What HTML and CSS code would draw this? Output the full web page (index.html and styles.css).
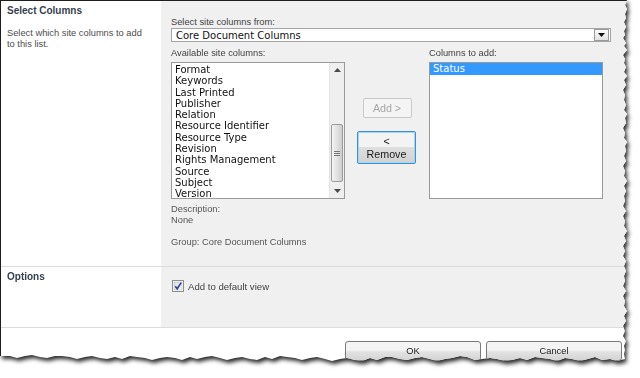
FILE: index.html
```html
<!DOCTYPE html>
<html lang="en">
<head>
    <meta charset="UTF-8">
    <meta name="viewport" content="width=device-width, initial-scale=1.0">
    <title>Add Columns from Site Columns</title>
    <link rel="stylesheet" href="styles.css">
</head>
<body>
    <div class="frame">
        <div class="sheet">
            <section class="section section-columns">
                <div class="section-info">
                    <h3>Select Columns</h3>
                    <p>Select which site columns to add to this list.</p>
                </div>
                <div class="section-body">
                    <div class="field-label">Select site columns from:</div>
                    <div class="dropdown">
                        <span>Core Document Columns</span>
                        <span class="dropdown-btn">
                            <svg width="7" height="4" viewBox="0 0 7 4"><path d="M0 0h7L3.5 4z" fill="#111"/></svg>
                        </span>
                    </div>

                    <div class="picker">
                        <div class="field-label">Available site columns:</div>
                        <div></div>
                        <div class="field-label">Columns to add:</div>

                        <div class="listbox">
                            <ul class="list-items">
                                <li>Format</li>
                                <li>Keywords</li>
                                <li>Last Printed</li>
                                <li>Publisher</li>
                                <li>Relation</li>
                                <li>Resource Identifier</li>
                                <li>Resource Type</li>
                                <li>Revision</li>
                                <li>Rights Management</li>
                                <li>Source</li>
                                <li>Subject</li>
                                <li>Version</li>
                            </ul>
                            <div class="scrollbar">
                                <div class="scroll-arrow">
                                    <svg width="7" height="4" viewBox="0 0 7 4"><path d="M0 4h7L3.5 0z" fill="#4a4a4a"/></svg>
                                </div>
                                <div class="scroll-space"></div>
                                <div class="scroll-thumb">
                                    <svg width="6" height="5" viewBox="0 0 6 5"><path d="M0 .5h6M0 2.5h6M0 4.5h6" stroke="#777" stroke-width="1"/></svg>
                                </div>
                                <div class="scroll-rest"></div>
                                <div class="scroll-arrow">
                                    <svg width="7" height="4" viewBox="0 0 7 4"><path d="M0 0h7L3.5 4z" fill="#4a4a4a"/></svg>
                                </div>
                            </div>
                        </div>

                        <div class="picker-actions">
                            <button class="btn-move" disabled>Add &gt;</button>
                            <button class="btn-move btn-focus">&lt;<br>Remove</button>
                        </div>

                        <div class="listbox">
                            <ul class="list-items list-full">
                                <li class="selected">Status</li>
                            </ul>
                        </div>
                    </div>

                    <div class="field-info">Description:<br>None</div>
                    <div class="field-info group-info">Group: Core Document Columns</div>
                </div>
            </section>

            <section class="section section-options">
                <div class="section-info">
                    <h3>Options</h3>
                </div>
                <div class="section-body">
                    <label class="check-row">
                        <svg class="checkbox" width="12" height="12" viewBox="0 0 12 12">
                            <defs>
                                <linearGradient id="cb" x1="0" y1="0" x2="1" y2="1">
                                    <stop offset="0" stop-color="#dcdcdc"/>
                                    <stop offset="1" stop-color="#fbfbfb"/>
                                </linearGradient>
                            </defs>
                            <rect x="0.5" y="0.5" width="11" height="11" fill="#fff" stroke="#8e8f8f"/>
                            <rect x="2" y="2" width="8" height="8" fill="url(#cb)" stroke="#b9b9b9" stroke-width="0.6"/>
                            <path d="M3.2 6.2l2 2.6L9.2 2.6" fill="none" stroke="#2b3f9a" stroke-width="1.6"/>
                        </svg>
                        <span>Add to default view</span>
                    </label>
                </div>
            </section>

            <footer class="footer">
                <button class="btn">OK</button>
                <button class="btn">Cancel</button>
            </footer>
        </div>
    </div>
</body>
</html>
```

FILE: styles.css
```css
body {
    margin: 0;
    padding: 0;
    background-color: #fff;
    font-family: "Liberation Sans", Arial, sans-serif;
    color: #444;
}
.frame {
    width: 640px;
    height: 378px;
    filter: drop-shadow(2px 3px 2px rgba(0, 0, 0, 0.85));
}
.sheet {
    width: 627px;
    height: 363px;
    background-color: #fff;
    border-top: 1px solid #1e1e1e;
    border-left: 1px solid #1e1e1e;
    box-sizing: border-box;
    display: flex;
    flex-direction: column;
    /* torn paper edge on the right and bottom */
    clip-path: polygon(0 0, 627px 0, 625px 5px, 627px 9px, 625px 14px, 626px 18px, 624px 22px, 626px 27px, 624px 31px, 625px 35px,
        623px 38px, 626px 43px, 624px 46px, 627px 50px, 623px 55px, 625px 59px, 624px 63px, 626px 67px, 624px 72px,
        627px 76px, 624px 80px, 626px 85px, 623px 90px, 625px 95px, 624px 100px, 626px 105px, 624px 110px, 627px 114px,
        625px 118px, 626px 123px, 623px 128px, 625px 133px, 624px 138px, 627px 142px, 625px 146px, 626px 151px,
        624px 156px, 626px 161px, 623px 166px, 625px 171px, 624px 176px, 627px 181px, 624px 186px, 626px 191px,
        624px 196px, 625px 201px, 623px 206px, 626px 211px, 623px 216px, 625px 221px, 624px 226px, 627px 231px,
        624px 236px, 626px 241px, 623px 246px, 625px 251px, 623px 256px, 626px 261px, 624px 266px, 626px 271px,
        624px 276px, 625px 281px, 623px 286px, 626px 291px, 623px 296px, 625px 301px, 624px 306px, 627px 311px,
        624px 316px, 626px 321px, 623px 326px, 625px 331px, 623px 336px, 626px 341px, 624px 346px, 625px 350px,
        624px 354px, 625px 359px,
        617px 361px, 610px 359px, 602px 360px, 595px 357px, 588px 359px, 580px 361px, 572px 359px, 565px 358px,
        557px 361px, 550px 359px, 542px 358px, 535px 357px, 527px 360px, 520px 358px, 512px 360px, 505px 361px,
        497px 359px, 490px 358px, 482px 359px, 475px 360px, 467px 357px, 460px 356px, 452px 358px, 445px 359px,
        437px 361px, 430px 359px, 422px 357px, 415px 358px, 407px 360px, 400px 359px, 392px 357px, 385px 357px,
        377px 360px, 370px 358px, 362px 361px, 355px 360px, 347px 358px, 340px 359px, 332px 361px, 325px 359px,
        317px 357px, 310px 358px, 302px 360px, 295px 358px, 287px 357px, 280px 356px, 272px 359px, 265px 357px,
        257px 360px, 250px 359px, 242px 357px, 235px 358px, 227px 360px, 220px 358px, 212px 356px, 205px 357px,
        197px 359px, 190px 357px, 182px 360px, 175px 358px, 167px 357px, 160px 358px, 152px 360px, 145px 358px,
        137px 357px, 130px 356px, 122px 359px, 115px 357px, 107px 359px, 100px 358px, 92px 356px, 85px 357px,
        77px 359px, 70px 357px, 62px 356px, 55px 356px, 47px 358px, 40px 357px, 32px 355px, 25px 356px,
        17px 358px, 10px 356px, 0 356px);
}
.section {
    display: grid;
    grid-template-columns: 160px 1fr;
    border-bottom: 1px solid #dcdcdc;
}
.section-columns {
    height: 265px;
}
.section-options {
    height: 60px;
}
.section-info {
    padding: 4px 16px 0 6px;
}
.section-info h3 {
    margin: 0;
    font-size: 10px;
    line-height: 12px;
    font-weight: bold;
    color: #36414f;
}
.section-info p {
    margin: 11px 0 0 0;
    font-size: 9.3px;
    line-height: 11px;
    color: #4d4d4d;
}
.section-body {
    background-color: #f0f0f0;
    padding: 16px 0 0 10px;
}
.section-options .section-body {
    padding-top: 13px;
}
.field-label {
    font-size: 9.3px;
    line-height: 11px;
    color: #3f3f3f;
}
.dropdown {
    width: 440px;
    height: 14px;
    box-sizing: border-box;
    border: 1px solid #a5a5a5;
    background-color: #fff;
    display: flex;
    align-items: center;
    justify-content: space-between;
    padding-left: 4px;
    font-family: "DejaVu Sans", Verdana, sans-serif;
    font-size: 10px;
    color: #111;
}
.dropdown-btn {
    width: 13px;
    height: 10px;
    margin-right: 1px;
    border: 1px solid #9a9a9a;
    background: linear-gradient(#fafafa, #e2e2e2);
    display: flex;
    align-items: center;
    justify-content: center;
}
.picker {
    margin-top: 6px;
    display: grid;
    grid-template-columns: 174px 84px 174px;
    row-gap: 3px;
}
.listbox {
    height: 137px;
    box-sizing: border-box;
    border: 1px solid #9a9a9a;
    background-color: #fff;
    display: flex;
    overflow: hidden;
}
.list-items {
    list-style: none;
    margin: 0;
    padding: 1px 0 0 0;
    flex: 1;
    font-family: "DejaVu Sans", Verdana, sans-serif;
    font-size: 10px;
    line-height: 11.3px;
    color: #111;
}
.list-items li {
    padding-left: 3px;
    white-space: nowrap;
}
.list-full {
    padding-top: 0;
}
.list-items li.selected {
    background-color: #3399ff;
    color: #fff;
    line-height: 12px;
}
.scrollbar {
    width: 14px;
    background-color: #efefef;
    border-left: 1px solid #e4e4e4;
    display: flex;
    flex-direction: column;
    align-items: center;
}
.scroll-arrow {
    height: 14px;
    display: flex;
    align-items: center;
    justify-content: center;
}
.scroll-space {
    height: 47px;
}
.scroll-thumb {
    width: 12px;
    height: 58px;
    box-sizing: border-box;
    border: 1px solid #9b9b9b;
    border-radius: 2px;
    background: linear-gradient(to right, #f4f4f4, #dedede 60%, #cdcdcd);
    display: flex;
    align-items: center;
    justify-content: center;
}
.scroll-rest {
    flex: 1;
}
.picker-actions {
    display: flex;
    flex-direction: column;
    align-items: center;
    padding-top: 36px;
    gap: 13px;
}
.btn-move {
    font-family: "Liberation Sans", Arial, sans-serif;
    font-size: 10.7px;
    line-height: 13px;
    border-radius: 2px;
    padding: 0;
    cursor: pointer;
}
.btn-move:disabled {
    width: 49px;
    height: 20px;
    color: #a6a6a6;
    background-color: #f4f4f4;
    border: 1px solid #c9c9c9;
}
.btn-focus {
    width: 59px;
    height: 33px;
    color: #1a1a1a;
    border: 1px solid #3c8fd0;
    box-shadow: inset 0 0 0 1px #9fd8f6;
    background: linear-gradient(#f3f3f3 50%, #dedede 50%, #d2d2d2);
    margin-left: -1px;
}
.field-info {
    margin-top: 5px;
    font-size: 9.3px;
    line-height: 10.5px;
    color: #555;
}
.group-info {
    margin-top: 12px;
}
.check-row {
    display: flex;
    align-items: center;
    gap: 4px;
    font-size: 9.6px;
    color: #3f3f3f;
}
.checkbox {
    margin-left: 1px;
}
.footer {
    display: flex;
    justify-content: flex-end;
    gap: 5px;
    padding: 13px 5px 0 0;
}
.btn {
    width: 136px;
    height: 20px;
    border: 1px solid #7a7a7a;
    border-radius: 3px;
    background: linear-gradient(#f4f4f4 45%, #e2e2e2 55%, #d4d4d4);
    font-family: "Liberation Sans", Arial, sans-serif;
    font-size: 9.3px;
    color: #222;
    padding: 0;
}
```
